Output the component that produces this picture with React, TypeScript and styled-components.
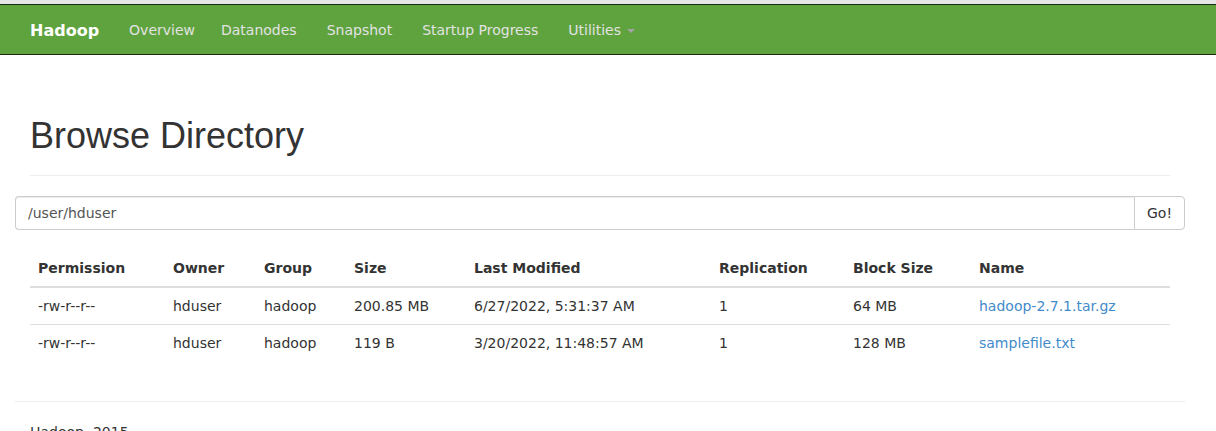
import React from 'react';
import styled, { createGlobalStyle } from 'styled-components';

const GlobalStyle = createGlobalStyle`
  html, body {
    margin: 0;
    padding: 0;
    background: #fff;
  }
  body {
    font-family: 'DejaVu Sans', 'Liberation Sans', sans-serif;
    font-size: 14px;
    line-height: 20px;
    color: #333;
  }
  * {
    box-sizing: border-box;
  }
`;

const TopStrip = styled.div`
  height: 4px;
  background: #e6e6e6;
`;

const Navbar = styled.nav`
  background: #5fa33e;
  border-top: 1px solid #1c2a14;
  border-bottom: 1px solid #1c2a14;
  height: 51px;
`;

const NavInner = styled.div`
  width: 1170px;
  margin-left: 15px;
  display: flex;
  align-items: center;
  height: 49px;
  padding-top: 2px;
`;

const Brand = styled.a`
  padding: 0 15px;
  font-size: 16px;
  font-weight: bold;
  color: #fff;
  text-decoration: none;
  line-height: 47px;
`;

const NavLink = styled.a<{ $tight?: boolean }>`
  padding: 0 ${({ $tight }) => ($tight ? '11px' : '15px')} 0 15px;
  font-size: 14px;
  color: #e2e2e2;
  text-decoration: none;
  line-height: 47px;
  display: flex;
  align-items: center;
`;

const Caret = styled.span`
  display: inline-block;
  width: 0;
  height: 0;
  margin-left: 6px;
  margin-top: 1px;
  border-top: 4px solid #a3a3a3;
  border-left: 4px solid transparent;
  border-right: 4px solid transparent;
`;

const Page = styled.div`
  width: 1170px;
  margin-left: 15px;
`;

const Padded = styled.div`
  padding: 0 15px;
`;

const PageHeader = styled.div`
  margin-top: 61px;
  padding-bottom: 9px;
  margin-bottom: 20px;
  border-bottom: 1px solid #eee;
`;

const Title = styled.h1`
  margin: 0 0 10px;
  font-family: 'Liberation Sans', Arial, sans-serif;
  font-size: 36px;
  font-weight: 500;
  line-height: 39.6px;
  color: #333;
`;

const InputGroup = styled.div`
  display: flex;
  height: 34px;
`;

const PathInput = styled.input`
  flex: 1;
  height: 34px;
  padding: 6px 12px;
  font-family: inherit;
  font-size: 14px;
  color: #555;
  border: 1px solid #ccc;
  border-right: none;
  border-radius: 4px 0 0 4px;
  box-shadow: inset 0 1px 1px rgba(0, 0, 0, 0.075);
  outline: none;
`;

const GoButton = styled.button`
  height: 34px;
  width: 51px;
  padding: 6px 12px;
  font-family: inherit;
  font-size: 14px;
  color: #333;
  background: #fff;
  border: 1px solid #ccc;
  border-radius: 0 4px 4px 0;
`;

const Table = styled.table`
  width: 100%;
  margin: 20px 0;
  border-collapse: collapse;
  table-layout: fixed;
`;

const Th = styled.th`
  padding: 8px;
  text-align: left;
  font-weight: bold;
  line-height: 20px;
  border-bottom: 2px solid #ddd;
`;

const Td = styled.td`
  padding: 8px;
  line-height: 20px;
  border-top: 1px solid #ddd;
  white-space: nowrap;
`;

const FileLink = styled.a`
  color: #428bca;
  text-decoration: none;
`;

const FooterRule = styled.hr`
  margin: 40px 0 20px;
  border: 0;
  border-top: 1px solid #eee;
`;

const FooterText = styled.p`
  margin: 0;
  padding: 0 15px;
`;

const columns = [
  { label: 'Permission', width: 135 },
  { label: 'Owner', width: 91 },
  { label: 'Group', width: 90 },
  { label: 'Size', width: 120 },
  { label: 'Last Modified', width: 245 },
  { label: 'Replication', width: 134 },
  { label: 'Block Size', width: 126 },
  { label: 'Name', width: 199 },
];

const files = [
  {
    permission: '-rw-r--r--',
    owner: 'hduser',
    group: 'hadoop',
    size: '200.85 MB',
    modified: '6/27/2022, 5:31:37 AM',
    replication: '1',
    blockSize: '64 MB',
    name: 'hadoop-2.7.1.tar.gz',
  },
  {
    permission: '-rw-r--r--',
    owner: 'hduser',
    group: 'hadoop',
    size: '119 B',
    modified: '3/20/2022, 11:48:57 AM',
    replication: '1',
    blockSize: '128 MB',
    name: 'samplefile.txt',
  },
];

const navItems = ['Overview', 'Datanodes', 'Snapshot', 'Startup Progress'];

export default function App() {
  return (
    <>
      <GlobalStyle />
      <TopStrip />
      <Navbar>
        <NavInner>
          <Brand href="#">Hadoop</Brand>
          {navItems.map((item, i) => (
            <NavLink key={item} href="#" $tight={i === 0}>
              {item}
            </NavLink>
          ))}
          <NavLink href="#">
            Utilities
            <Caret />
          </NavLink>
        </NavInner>
      </Navbar>
      <Page>
        <Padded>
          <PageHeader>
            <Title>Browse Directory</Title>
          </PageHeader>
        </Padded>
        <InputGroup>
          <PathInput defaultValue="/user/hduser" />
          <GoButton>Go!</GoButton>
        </InputGroup>
        <Padded>
          <Table>
            <colgroup>
              {columns.map((c) => (
                <col key={c.label} style={{ width: c.width }} />
              ))}
            </colgroup>
            <thead>
              <tr>
                {columns.map((c) => (
                  <Th key={c.label}>{c.label}</Th>
                ))}
              </tr>
            </thead>
            <tbody>
              {files.map((f) => (
                <tr key={f.name}>
                  <Td>{f.permission}</Td>
                  <Td>{f.owner}</Td>
                  <Td>{f.group}</Td>
                  <Td>{f.size}</Td>
                  <Td>{f.modified}</Td>
                  <Td>{f.replication}</Td>
                  <Td>{f.blockSize}</Td>
                  <Td>
                    <FileLink href="#">{f.name}</FileLink>
                  </Td>
                </tr>
              ))}
            </tbody>
          </Table>
        </Padded>
        <FooterRule />
        <FooterText>Hadoop, 2015</FooterText>
      </Page>
    </>
  );
}
